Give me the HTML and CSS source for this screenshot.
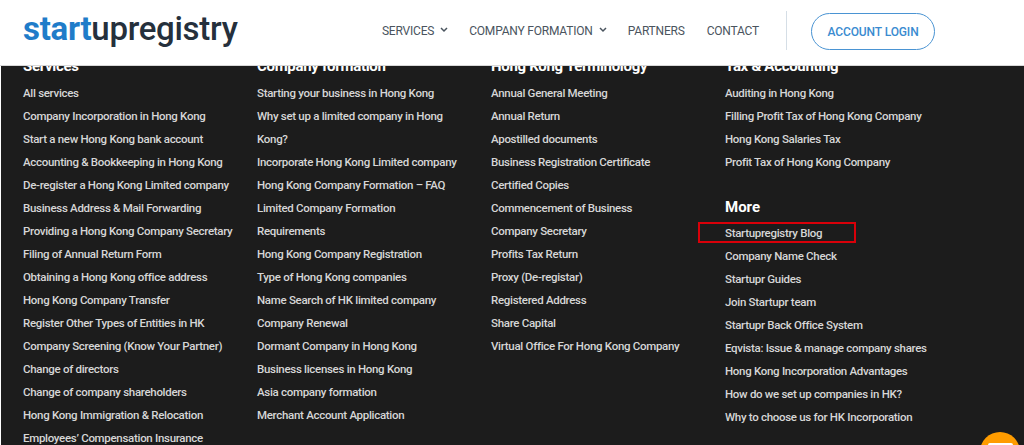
FILE: index.html
```html
<!DOCTYPE html>
<html lang="en">
<head>
<meta charset="utf-8">
<title>Startupregistry</title>
<link rel="stylesheet" href="styles.css">
</head>
<body>
<header class="site-header">
  <a class="logo"><span class="logo-start">start</span>upregistry</a>
  <nav class="nav">
    <a class="nav-link has-chev">SERVICES <svg class="chev" viewBox="0 0 8 6" width="8" height="6"><path d="M1 1l3 3 3-3" fill="none" stroke="#4a545e" stroke-width="1.5"/></svg></a>
    <a class="nav-link has-chev">COMPANY FORMATION <svg class="chev" viewBox="0 0 8 6" width="8" height="6"><path d="M1 1l3 3 3-3" fill="none" stroke="#4a545e" stroke-width="1.5"/></svg></a>
    <a class="nav-link partners">PARTNERS</a>
    <a class="nav-link">CONTACT</a>
    <span class="nav-divider"></span>
    <a class="login">ACCOUNT LOGIN</a>
  </nav>
</header>
<footer class="footer">
  <div class="footer-grid">
    <section class="col">
      <h4>Services</h4>
      <ul>
        <li>All services</li>
        <li>Company Incorporation in Hong Kong</li>
        <li>Start a new Hong Kong bank account</li>
        <li>Accounting &amp; Bookkeeping in Hong Kong</li>
        <li>De-register a Hong Kong Limited company</li>
        <li>Business Address &amp; Mail Forwarding</li>
        <li>Providing a Hong Kong Company Secretary</li>
        <li>Filing of Annual Return Form</li>
        <li>Obtaining a Hong Kong office address</li>
        <li>Hong Kong Company Transfer</li>
        <li>Register Other Types of Entities in HK</li>
        <li>Company Screening (Know Your Partner)</li>
        <li>Change of directors</li>
        <li>Change of company shareholders</li>
        <li>Hong Kong Immigration &amp; Relocation</li>
        <li>Employees’ Compensation Insurance</li>
      </ul>
    </section>
    <section class="col">
      <h4>Company formation</h4>
      <ul>
        <li>Starting your business in Hong Kong</li>
        <li>Why set up a limited company in Hong<br>Kong?</li>
        <li>Incorporate Hong Kong Limited company</li>
        <li>Hong Kong Company Formation – FAQ</li>
        <li>Limited Company Formation<br>Requirements</li>
        <li>Hong Kong Company Registration</li>
        <li>Type of Hong Kong companies</li>
        <li>Name Search of HK limited company</li>
        <li>Company Renewal</li>
        <li>Dormant Company in Hong Kong</li>
        <li>Business licenses in Hong Kong</li>
        <li>Asia company formation</li>
        <li>Merchant Account Application</li>
      </ul>
    </section>
    <section class="col">
      <h4>Hong Kong Terminology</h4>
      <ul>
        <li>Annual General Meeting</li>
        <li>Annual Return</li>
        <li>Apostilled documents</li>
        <li>Business Registration Certificate</li>
        <li>Certified Copies</li>
        <li>Commencement of Business</li>
        <li>Company Secretary</li>
        <li>Profits Tax Return</li>
        <li>Proxy (De-registar)</li>
        <li>Registered Address</li>
        <li>Share Capital</li>
        <li>Virtual Office For Hong Kong Company</li>
      </ul>
    </section>
    <section class="col">
      <h4>Tax &amp; Accounting</h4>
      <ul>
        <li>Auditing in Hong Kong</li>
        <li>Filling Profit Tax of Hong Kong Company</li>
        <li>Hong Kong Salaries Tax</li>
        <li>Profit Tax of Hong Kong Company</li>
      </ul>
      <h4 class="more">More</h4>
      <ul>
        <li class="marked">Startupregistry Blog<span class="red-box"></span></li>
        <li>Company Name Check</li>
        <li>Startupr Guides</li>
        <li>Join Startupr team</li>
        <li>Startupr Back Office System</li>
        <li>Eqvista: Issue &amp; manage company shares</li>
        <li>Hong Kong Incorporation Advantages</li>
        <li>How do we set up companies in HK?</li>
        <li>Why to choose us for HK Incorporation</li>
      </ul>
    </section>
  </div>
</footer>
<div class="chat"><span class="chat-icon"></span></div>
</body>
</html>
```
FILE: styles.css
```css
* { box-sizing: border-box; }
html, body { margin: 0; height: 445px; overflow: hidden; background: #fff; }
body { font-family: Roboto, "Open Sans", sans-serif; position: relative; }

.site-header {
  position: relative;
  z-index: 2;
  height: 66px;
  background: #fff;
  border-bottom: 1px solid #d8d8d8;
  display: flex;
  align-items: center;
  justify-content: space-between;
  padding: 0 89px 4px 23px;
}
.logo {
  font-size: 33px;
  font-weight: 500;
  color: #25303c;
  letter-spacing: -0.3px;
  line-height: 1;
  margin-top: -4px;
}
.logo-start { color: #1f7cc9; font-weight: 700; }
.nav { display: flex; align-items: center; }
.nav-link {
  font-size: 12px;
  font-weight: 400;
  color: #4a545e;
  letter-spacing: -0.2px;
  margin-right: 24px;
  white-space: nowrap;
  display: flex;
  align-items: center;
  gap: 6px;
}
.has-chev { margin-right: 21px; }
.partners { margin-right: 22px; }
.chev { margin-top: -1px; }
.nav-divider {
  width: 1px;
  height: 39px;
  background: #d5dee6;
  margin: 0 24px 0 3px;
}
.login {
  width: 124px;
  height: 37px;
  border: 1px solid #4a94d3;
  border-radius: 19px;
  color: #3a8bd0;
  font-size: 12px;
  font-weight: 500;
  letter-spacing: -0.1px;
  display: flex;
  align-items: center;
  justify-content: center;
  white-space: nowrap;
  margin-top: 2px;
}

.footer {
  height: 379px;
  margin-left: 1px;
  background: #1c1c1c;
  color: #d6d6d6;
  overflow: hidden;
}
.footer-grid {
  display: grid;
  grid-template-columns: repeat(4, 234px);
  padding-left: 22px;
  margin-top: -11px;
}
.col h4 {
  margin: 0 0 4px;
  font-size: 15px;
  font-weight: 700;
  letter-spacing: -0.3px;
  line-height: 23px;
  color: #fff;
}
.col h4.more { margin: 22px 0 3px; letter-spacing: 0; }
.col ul { list-style: none; margin: 0; padding: 0; }
.col li {
  font-size: 11.5px;
  font-weight: 500;
  letter-spacing: -0.3px;
  line-height: 23px;
  white-space: nowrap;
}
.marked { position: relative; }
.red-box {
  position: absolute;
  left: -27px;
  top: 0;
  width: 158px;
  height: 21px;
  border: 2px solid #d90009;
}
.chat {
  position: absolute;
  left: 980px;
  top: 432px;
  width: 40px;
  height: 40px;
  border-radius: 50%;
  background: #ff9c00;
  display: flex;
  justify-content: center;
}
.chat-icon {
  width: 25px;
  height: 16px;
  margin-top: 11px;
  border: 2px solid #fff;
  border-radius: 2px;
}
```
